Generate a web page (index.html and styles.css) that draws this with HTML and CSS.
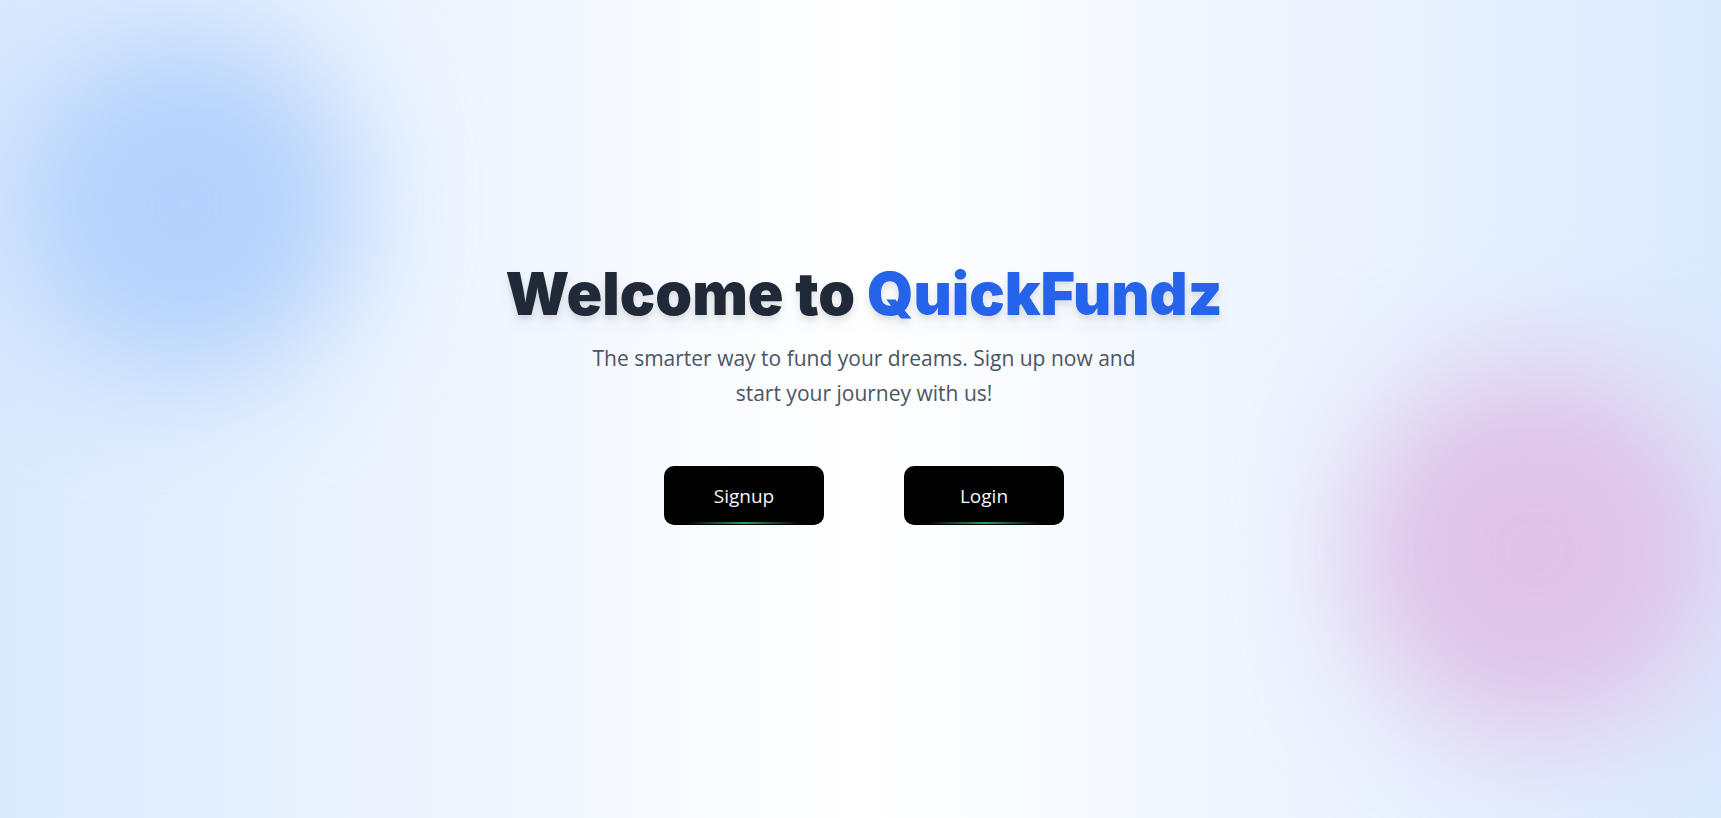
FILE: index.html
```html
<!DOCTYPE html>
<html lang="en">
<head>
<meta charset="utf-8">
<title>QuickFundz</title>
<link rel="stylesheet" href="styles.css">
</head>
<body>
<div class="page">
  <div class="blob blob-blue"></div>
  <div class="blob blob-pink"></div>
  <main class="hero">
    <h1 class="title">Welcome to <span class="brand">QuickFundz</span></h1>
    <p class="subtitle">The smarter way to fund your dreams. Sign up now and start your journey with us!</p>
    <div class="actions">
      <button class="btn">Signup</button>
      <button class="btn">Login</button>
    </div>
  </main>
</div>
</body>
</html>
```

FILE: styles.css
```css
* { box-sizing: border-box; }
html, body { margin: 0; padding: 0; }
body {
  font-family: "Open Sans", "Noto Sans", sans-serif;
}
.page {
  position: relative;
  min-height: 100vh;
  overflow: hidden;
  background: linear-gradient(90deg, #dbeafe 0%, #ffffff 50%, #dbeafe 100%);
  display: flex;
  align-items: center;
  justify-content: center;
  padding-left: 7px;
}
.blob {
  position: absolute;
  border-radius: 50%;
  filter: blur(60px);
}
.blob-blue {
  left: 12px;
  top: 32px;
  width: 345px;
  height: 345px;
  background: #b3d1fc;
}
.blob-pink {
  left: 1350px;
  top: 365px;
  width: 370px;
  height: 370px;
  background: #dfc2e8;
}
.hero {
  position: relative;
  z-index: 1;
  display: flex;
  flex-direction: column;
  align-items: center;
  text-align: center;
  padding-bottom: 32px;
}
.title {
  margin: 3px 0 0;
  font-family: "Inter", "Roboto", sans-serif;
  font-weight: 900;
  font-size: 59px;
  line-height: 60px;
  color: #1f2937;
  filter: drop-shadow(0 10px 8px rgba(0,0,0,0.04)) drop-shadow(0 4px 3px rgba(0,0,0,0.1));
}
.brand { color: #2563eb; }
.subtitle {
  margin: 17px 0 0;
  max-width: 576px;
  font-size: 21px;
  line-height: 35px;
  color: #4b5563;
}
.actions {
  display: flex;
  gap: 80px;
  margin-top: 55px;
}
.btn {
  position: relative;
  width: 160px;
  height: 59px;
  border: none;
  border-radius: 10px;
  background: #000;
  color: #f5f7ff;
  font-family: "Open Sans", "Noto Sans", sans-serif;
  font-size: 19px;
  cursor: pointer;
}
.btn::after {
  content: "";
  position: absolute;
  left: 23px;
  right: 22px;
  bottom: 1px;
  height: 2px;
  background: linear-gradient(90deg, transparent, #4ade80 50%, transparent);
  opacity: 0.7;
}
```
